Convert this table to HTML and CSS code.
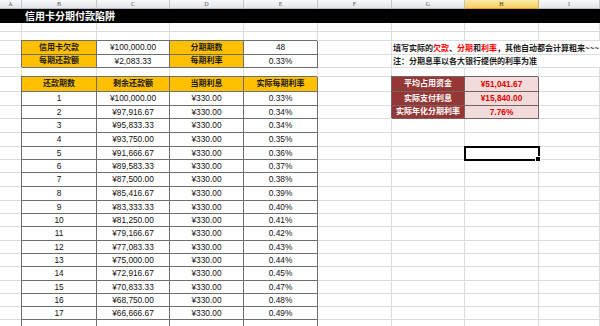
FILE: index.html
```html
<!DOCTYPE html>
<html lang="zh-CN">
<head>
<meta charset="utf-8">
<title>信用卡分期付款陷阱</title>
<link rel="stylesheet" href="styles.css">
</head>
<body>
<div class="sheet">
  <div class="c hd">A</div><div class="c hd">B</div><div class="c hd">C</div><div class="c hd">D</div><div class="c hd">E</div><div class="c hd">F</div><div class="c hd">G</div><div class="c hd act">H</div><div class="c hd">I</div>

  <div class="title">信用卡分期付款陷阱</div>

  <div class="c"></div><div class="c"></div><div class="c"></div><div class="c"></div><div class="c"></div><div class="c"></div><div class="c"></div><div class="c"></div><div class="c"></div>
  <div class="c"></div><div class="c"></div><div class="c"></div><div class="c"></div><div class="c"></div><div class="c"></div><div class="c"></div><div class="c"></div><div class="c"></div>

  <div class="c"></div><div class="c b o">信用卡欠款</div><div class="c b">¥100,000.00</div><div class="c b o">分期期数</div><div class="c b">48</div><div class="c"></div>
  <div class="note">填写实际的<span class="red">欠款</span>、<span class="red">分期</span>和<span class="red">利率</span>，其他自动都会计算粗来~~~</div>

  <div class="c"></div><div class="c b o">每期还款额</div><div class="c b">¥2,083.33</div><div class="c b o">每期利率</div><div class="c b">0.33%</div><div class="c"></div>
  <div class="note">注：分期息率以各大银行提供的利率为准</div>

  <div class="c"></div><div class="c"></div><div class="c"></div><div class="c"></div><div class="c"></div><div class="c"></div><div class="c"></div><div class="c"></div><div class="c"></div>

  <div class="c"></div><div class="c b o">还款期数</div><div class="c b o">剩余还款额</div><div class="c b o">当期利息</div><div class="c b o">实际每期利率</div><div class="c"></div><div class="c b dr">平均占用资金</div><div class="c b pk">¥51,041.67</div><div class="c"></div>

  <div class="c"></div><div class="c b">1</div><div class="c b">¥100,000.00</div><div class="c b">¥330.00</div><div class="c b">0.33%</div><div class="c"></div><div class="c b dr">实际支付利息</div><div class="c b pk">¥15,840.00</div><div class="c"></div>
  <div class="c"></div><div class="c b">2</div><div class="c b">¥97,916.67</div><div class="c b">¥330.00</div><div class="c b">0.34%</div><div class="c"></div><div class="c b dr">实际年化分期利率</div><div class="c b pk">7.76%</div><div class="c"></div>
  <div class="c"></div><div class="c b">3</div><div class="c b">¥95,833.33</div><div class="c b">¥330.00</div><div class="c b">0.34%</div><div class="c"></div><div class="c"></div><div class="c"></div><div class="c"></div>
  <div class="c"></div><div class="c b">4</div><div class="c b">¥93,750.00</div><div class="c b">¥330.00</div><div class="c b">0.35%</div><div class="c"></div><div class="c"></div><div class="c"></div><div class="c"></div>
  <div class="c"></div><div class="c b">5</div><div class="c b">¥91,666.67</div><div class="c b">¥330.00</div><div class="c b">0.36%</div><div class="c"></div><div class="c"></div><div class="c sel"></div><div class="c"></div>
  <div class="c"></div><div class="c b">6</div><div class="c b">¥89,583.33</div><div class="c b">¥330.00</div><div class="c b">0.37%</div><div class="c"></div><div class="c"></div><div class="c"></div><div class="c"></div>
  <div class="c"></div><div class="c b">7</div><div class="c b">¥87,500.00</div><div class="c b">¥330.00</div><div class="c b">0.38%</div><div class="c"></div><div class="c"></div><div class="c"></div><div class="c"></div>
  <div class="c"></div><div class="c b">8</div><div class="c b">¥85,416.67</div><div class="c b">¥330.00</div><div class="c b">0.39%</div><div class="c"></div><div class="c"></div><div class="c"></div><div class="c"></div>
  <div class="c"></div><div class="c b">9</div><div class="c b">¥83,333.33</div><div class="c b">¥330.00</div><div class="c b">0.40%</div><div class="c"></div><div class="c"></div><div class="c"></div><div class="c"></div>
  <div class="c"></div><div class="c b">10</div><div class="c b">¥81,250.00</div><div class="c b">¥330.00</div><div class="c b">0.41%</div><div class="c"></div><div class="c"></div><div class="c"></div><div class="c"></div>
  <div class="c"></div><div class="c b">11</div><div class="c b">¥79,166.67</div><div class="c b">¥330.00</div><div class="c b">0.42%</div><div class="c"></div><div class="c"></div><div class="c"></div><div class="c"></div>
  <div class="c"></div><div class="c b">12</div><div class="c b">¥77,083.33</div><div class="c b">¥330.00</div><div class="c b">0.43%</div><div class="c"></div><div class="c"></div><div class="c"></div><div class="c"></div>
  <div class="c"></div><div class="c b">13</div><div class="c b">¥75,000.00</div><div class="c b">¥330.00</div><div class="c b">0.44%</div><div class="c"></div><div class="c"></div><div class="c"></div><div class="c"></div>
  <div class="c"></div><div class="c b">14</div><div class="c b">¥72,916.67</div><div class="c b">¥330.00</div><div class="c b">0.45%</div><div class="c"></div><div class="c"></div><div class="c"></div><div class="c"></div>
  <div class="c"></div><div class="c b">15</div><div class="c b">¥70,833.33</div><div class="c b">¥330.00</div><div class="c b">0.47%</div><div class="c"></div><div class="c"></div><div class="c"></div><div class="c"></div>
  <div class="c"></div><div class="c b">16</div><div class="c b">¥68,750.00</div><div class="c b">¥330.00</div><div class="c b">0.48%</div><div class="c"></div><div class="c"></div><div class="c"></div><div class="c"></div>
  <div class="c"></div><div class="c b">17</div><div class="c b">¥66,666.67</div><div class="c b">¥330.00</div><div class="c b">0.49%</div><div class="c"></div><div class="c"></div><div class="c"></div><div class="c"></div>
  <div class="c"></div><div class="c b"></div><div class="c b"></div><div class="c b"></div><div class="c b"></div><div class="c"></div><div class="c"></div><div class="c"></div><div class="c"></div>
</div>
</body>
</html>
```
FILE: styles.css
```css
* {
  box-sizing: border-box;
  margin: 0;
  padding: 0;
}

html,
body {
  width: 600px;
  height: 326px;
  overflow: hidden;
  background: #ffffff;
}

body {
  font-family: "Liberation Sans", "Noto Sans CJK SC", sans-serif;
  font-size: 8.3px;
  color: #111111;
}

.sheet {
  display: grid;
  grid-template-columns: 22px 75px 73px 74px 74px 74px 73px 74px 61px;
  grid-template-rows:
    9px 14px 9px 9px 14px 13px 9px 15px
    14px 13px 14px 14px 13px 13px 14px 14px 13px
    13px 14px 13px 13px 14px 13px 13px 13px 13px;
}

.c {
  display: flex;
  align-items: center;
  justify-content: center;
  white-space: nowrap;
  line-height: 1;
  border-right: 1px solid #dadcdd;
  border-bottom: 1px solid #dadcdd;
}

.hd {
  background: linear-gradient(#f8f9fa, #e2e5e9);
  border-right-color: #c3c8ce;
  border-bottom-color: #b7bcc4;
  font-family: "Liberation Serif", serif;
  font-size: 6px;
  color: #5a5a5a;
}

.hd.act {
  background: linear-gradient(#fdeca9, #f9cd5c);
  border-right-color: #e2b24c;
  border-bottom-color: #e0a32c;
  color: #333333;
}

.title {
  grid-column: 1 / -1;
  display: flex;
  align-items: center;
  padding-left: 25px;
  background: #000000;
  color: #ffffff;
  font-family: "Noto Sans CJK SC", sans-serif;
  font-size: 10px;
  font-weight: 700;
  line-height: 1;
}

.note {
  grid-column: 7 / -1;
  display: flex;
  align-items: center;
  padding-left: 1px;
  border-bottom: 1px solid #dadcdd;
  font-family: "Noto Sans CJK SC", sans-serif;
  font-size: 8px;
  font-weight: 700;
  color: #1a1a1a;
  white-space: nowrap;
  overflow: hidden;
  line-height: 1;
}

.red {
  color: #ff0000;
}

.b {
  border-right-color: #6e6e6e;
  border-bottom-color: #6e6e6e;
  box-shadow: -1px -1px 0 #6e6e6e;
}

.o {
  background: #ffc000;
  color: #1a1a1a;
  font-weight: 700;
  font-size: 8px;
}

.dr {
  background: #953735;
  color: #ffffff;
  font-weight: 700;
  font-size: 8px;
  border-right-color: #7a6060;
  border-bottom-color: #7a6060;
  box-shadow: -1px -1px 0 #7a6060;
}

.pk {
  background: #f2dcdb;
  color: #e00000;
  font-weight: 700;
  border-right-color: #7a6060;
  border-bottom-color: #7a6060;
  box-shadow: -1px -1px 0 #7a6060;
}

.sel {
  position: relative;
  outline: 2px solid #000000;
  outline-offset: -1px;
}

.sel::after {
  content: "";
  position: absolute;
  right: -3px;
  bottom: -3px;
  width: 4px;
  height: 4px;
  background: #000000;
  border: 1px solid #ffffff;
}
```
